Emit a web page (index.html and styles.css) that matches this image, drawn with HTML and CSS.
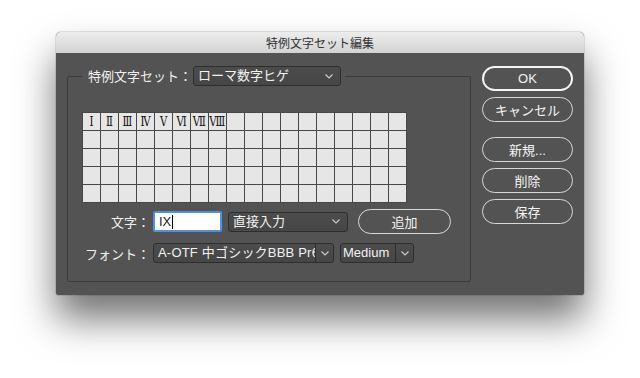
FILE: index.html
```html
<!DOCTYPE html>
<html>
    <head>
        <meta charset="utf-8">
        <title>特例文字セット編集</title>
        <link rel="stylesheet" href="styles.css">
    </head>
    <body>
        <div class="desk">
            <div class="dialog">
                <div class="titlebar">特例文字セット編集</div>
                <div class="dialog-body">
                    <fieldset class="group">
                        <legend class="group-head">
                            <span class="set-label">特例文字セット：</span>
                            <div class="select set-select">
                                <span class="select-text">ローマ数字ヒゲ</span>
                                <svg class="chev" width="8" height="5" viewBox="0 0 8 5"><polyline points="0.5,0.5 4,4 7.5,0.5" fill="none" stroke="#cfcfcf" stroke-width="1.1"/></svg>
                            </div>
                        </legend>

                        <div class="glyphs">
                            <div class="cell"><span>&#x2160;</span></div><div class="cell"><span>&#x2161;</span></div><div class="cell"><span>&#x2162;</span></div><div class="cell"><span>&#x2163;</span></div><div class="cell"><span>&#x2164;</span></div><div class="cell"><span>&#x2165;</span></div><div class="cell"><span>&#x2166;</span></div><div class="cell"><span>&#x2167;</span></div><div class="cell"></div><div class="cell"></div><div class="cell"></div><div class="cell"></div><div class="cell"></div><div class="cell"></div><div class="cell"></div><div class="cell"></div><div class="cell"></div><div class="cell"></div>
                            <div class="cell"></div><div class="cell"></div><div class="cell"></div><div class="cell"></div><div class="cell"></div><div class="cell"></div><div class="cell"></div><div class="cell"></div><div class="cell"></div><div class="cell"></div><div class="cell"></div><div class="cell"></div><div class="cell"></div><div class="cell"></div><div class="cell"></div><div class="cell"></div><div class="cell"></div><div class="cell"></div>
                            <div class="cell"></div><div class="cell"></div><div class="cell"></div><div class="cell"></div><div class="cell"></div><div class="cell"></div><div class="cell"></div><div class="cell"></div><div class="cell"></div><div class="cell"></div><div class="cell"></div><div class="cell"></div><div class="cell"></div><div class="cell"></div><div class="cell"></div><div class="cell"></div><div class="cell"></div><div class="cell"></div>
                            <div class="cell"></div><div class="cell"></div><div class="cell"></div><div class="cell"></div><div class="cell"></div><div class="cell"></div><div class="cell"></div><div class="cell"></div><div class="cell"></div><div class="cell"></div><div class="cell"></div><div class="cell"></div><div class="cell"></div><div class="cell"></div><div class="cell"></div><div class="cell"></div><div class="cell"></div><div class="cell"></div>
                            <div class="cell"></div><div class="cell"></div><div class="cell"></div><div class="cell"></div><div class="cell"></div><div class="cell"></div><div class="cell"></div><div class="cell"></div><div class="cell"></div><div class="cell"></div><div class="cell"></div><div class="cell"></div><div class="cell"></div><div class="cell"></div><div class="cell"></div><div class="cell"></div><div class="cell"></div><div class="cell"></div>
                        </div>

                        <div class="form">
                            <div class="field-label">文字：</div>
                            <div class="row">
                                <div class="text-input">IX<span class="caret"></span></div>
                                <div class="select mode-select">
                                    <span class="select-text">直接入力</span>
                                    <svg class="chev" width="8" height="5" viewBox="0 0 8 5"><polyline points="0.5,0.5 4,4 7.5,0.5" fill="none" stroke="#cfcfcf" stroke-width="1.1"/></svg>
                                </div>
                                <div class="btn add-btn">追加</div>
                            </div>

                            <div class="field-label">フォント：</div>
                            <div class="row row-font">
                                <div class="combo font-combo">
                                    <span class="combo-text">A-OTF 中ゴシックBBB Pr6N</span>
                                    <span class="combo-arrow"><svg width="8" height="5" viewBox="0 0 8 5"><polyline points="0.5,0.5 4,4 7.5,0.5" fill="none" stroke="#cfcfcf" stroke-width="1.1"/></svg></span>
                                </div>
                                <div class="combo style-combo">
                                    <span class="combo-text">Medium</span>
                                    <span class="combo-arrow"><svg width="8" height="5" viewBox="0 0 8 5"><polyline points="0.5,0.5 4,4 7.5,0.5" fill="none" stroke="#cfcfcf" stroke-width="1.1"/></svg></span>
                                </div>
                            </div>
                        </div>
                    </fieldset>

                    <div class="actions">
                        <div class="btn btn-default">OK</div>
                        <div class="btn">キャンセル</div>
                        <div class="btn btn-new">新規...</div>
                        <div class="btn">削除</div>
                        <div class="btn">保存</div>
                    </div>
                </div>
            </div>
        </div>
    </body>
</html>
```

FILE: styles.css
```css
html, body {
    height: 100%;
}
body {
    margin: 0;
    background: #fff;
    font-family: "Liberation Sans", "Noto Sans CJK JP", sans-serif;
    font-size: 13px;
    -webkit-font-smoothing: antialiased;
}
.desk {
    box-sizing: border-box;
    width: 640px;
    height: 378px;
    padding: 32px 0 0 56px;
    background: #fff;
}
.dialog {
    width: 528px;
    border-radius: 5px 5px 3px 3px;
    background: #535353;
    box-shadow: 0 24px 38px rgba(0, 0, 0, 0.55), 0 0 0 1px rgba(0, 0, 0, 0.1);
}
.titlebar {
    height: 21px;
    line-height: 21px;
    text-align: center;
    font-family: "Noto Sans CJK JP", sans-serif;
    font-size: 12px;
    color: #333;
    border-radius: 5px 5px 0 0;
    background: linear-gradient(#ededed, #d3d3d3);
}
.dialog-body {
    display: flex;
    gap: 11px;
    padding: 13px 11px 13px 11px;
    border-radius: 0 0 3px 3px;
    background: #535353;
    color: #efefef;
}

/* group box */
.group {
    box-sizing: border-box;
    width: 404px;
    min-width: 0;
    margin: 0;
    padding: 26px 14px 18px 14px;
    border: 1px solid #3b3b3b;
    border-radius: 2px;
}
.group-head {
    display: flex;
    align-items: center;
    padding: 0 4px 0 6px;
}
.set-label {
    width: 105px;
    font-family: "Noto Sans CJK JP", sans-serif;
    line-height: 20px;
}
.select {
    box-sizing: border-box;
    display: flex;
    align-items: center;
    justify-content: space-between;
    height: 20px;
    padding: 0 7px 0 4px;
    border: 1px solid #2e2e2e;
    border-radius: 3px;
    background: linear-gradient(#4c4c4c, #464646);
    color: #f2f2f2;
}
.select-text {
    line-height: 18px;
}
.set-select {
    width: 148px;
}
.chev {
    display: block;
}

/* glyph table */
.glyphs {
    display: grid;
    grid-template-columns: repeat(18, 18px);
    grid-auto-rows: 18px;
    width: max-content;
    border-top: 1px solid #474747;
    border-left: 1px solid #474747;
    background: #e6e6e6;
}
.cell {
    display: flex;
    align-items: center;
    justify-content: center;
    border-right: 1px solid #474747;
    border-bottom: 1px solid #474747;
    font-family: "DejaVu Serif", "Liberation Serif", serif;
    font-size: 13px;
    color: #111;
    overflow: hidden;
}
.cell span {
    display: inline-block;
    transform: scaleX(0.78);
    line-height: 17px;
}

/* form rows */
.form {
    display: grid;
    grid-template-columns: 68px auto;
    column-gap: 3px;
    row-gap: 9px;
    align-items: center;
    margin-top: 6px;
}
.field-label {
    text-align: right;
    font-family: "Noto Sans CJK JP", sans-serif;
    color: #efefef;
}
.row {
    display: flex;
    align-items: center;
    height: 25px;
}
.row-font {
    height: 20px;
    gap: 6px;
}
.text-input {
    box-sizing: border-box;
    display: flex;
    align-items: center;
    width: 69px;
    height: 21px;
    padding-left: 4px;
    border: 2px solid #4a93e6;
    border-radius: 2px;
    background: #fff;
    color: #222;
}
.caret {
    width: 1px;
    height: 14px;
    margin-left: 1px;
    background: #000;
}
.mode-select {
    width: 120px;
    margin-left: 6px;
}
.combo {
    box-sizing: border-box;
    display: flex;
    height: 20px;
    border: 1px solid #2e2e2e;
    border-radius: 3px;
    background: linear-gradient(#4c4c4c, #464646);
    color: #f2f2f2;
}
.combo-text {
    flex: 1;
    overflow: hidden;
    white-space: nowrap;
    padding-left: 4px;
    line-height: 18px;
}
.combo-arrow {
    display: flex;
    align-items: center;
    justify-content: center;
    width: 17px;
    border-left: 1px solid #2e2e2e;
}
.font-combo {
    width: 181px;
}
.font-combo .combo-text {
    letter-spacing: 0.2px;
}
.style-combo {
    width: 74px;
}
.style-combo .combo-text {
    padding-left: 2px;
}

/* buttons */
.btn {
    box-sizing: border-box;
    display: flex;
    align-items: center;
    justify-content: center;
    height: 25px;
    border: 1px solid #d8d8d8;
    border-radius: 13px;
    color: #f4f4f4;
    font-family: "Liberation Sans", "Noto Sans CJK JP", sans-serif;
}
.add-btn {
    width: 93px;
    margin-left: 10px;
}
.actions {
    display: flex;
    flex-direction: column;
    gap: 6px;
    width: 91px;
}
.btn-default {
    border: 2px solid #f4f4f4;
}
.btn-new {
    margin-top: 9px;
}
```
